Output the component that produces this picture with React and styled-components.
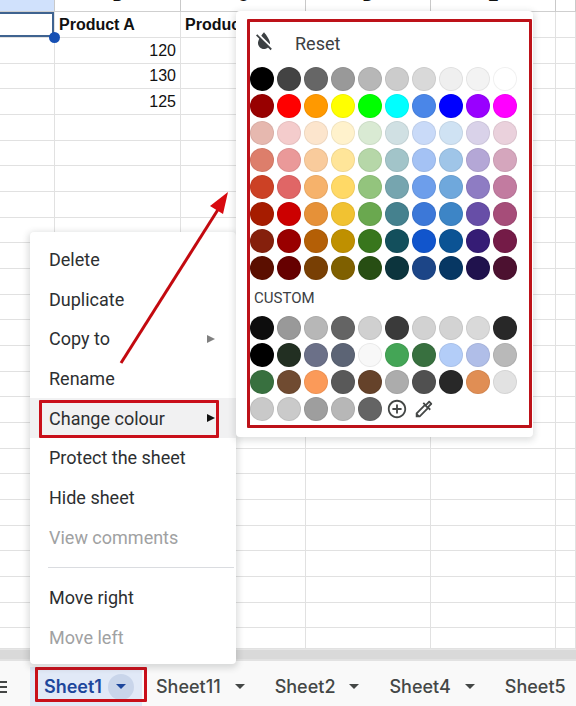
import React from 'react'
import styled, { createGlobalStyle } from 'styled-components'
import { MdFormatColorReset, MdAddCircleOutline, MdOutlineColorize } from 'react-icons/md'

const ROWS = [
    ['', 'Product A', 'Product B', '', '', ''],
    ['', '120', '', '', '', ''],
    ['', '130', '', '', '', ''],
    ['', '125', '', '', '', ''],
    ...Array.from({ length: 21 }, () => ['', '', '', '', '', '']),
]

const MENU = [
    { label: 'Delete' },
    { label: 'Duplicate' },
    { label: 'Copy to', submenu: true },
    { label: 'Rename' },
    { label: 'Change colour', submenu: true, active: true },
    { label: 'Protect the sheet' },
    { label: 'Hide sheet' },
    { label: 'View comments', disabled: true },
]

const COLOURS = [
    '#000000', '#434343', '#666666', '#999999', '#b7b7b7', '#cccccc', '#d9d9d9', '#efefef', '#f3f3f3', '#ffffff',
    '#980000', '#ff0000', '#ff9900', '#ffff00', '#00ff00', '#00ffff', '#4a86e8', '#0000ff', '#9900ff', '#ff00ff',
    '#e6b8af', '#f4cccc', '#fce5cd', '#fff2cc', '#d9ead3', '#d0e0e3', '#c9daf8', '#cfe2f3', '#d9d2e9', '#ead1dc',
    '#dd7e6b', '#ea9999', '#f9cb9c', '#ffe599', '#b6d7a8', '#a2c4c9', '#a4c2f4', '#9fc5e8', '#b4a7d6', '#d5a6bd',
    '#cc4125', '#e06666', '#f6b26b', '#ffd966', '#93c47d', '#76a5af', '#6d9eeb', '#6fa8dc', '#8e7cc3', '#c27ba0',
    '#a61c00', '#cc0000', '#e69138', '#f1c232', '#6aa84f', '#45818e', '#3c78d8', '#3d85c6', '#674ea7', '#a64d79',
    '#85200c', '#990000', '#b45f06', '#bf9000', '#38761d', '#134f5c', '#1155cc', '#0b5394', '#351c75', '#741b47',
    '#5b0f00', '#660000', '#783f04', '#7f6000', '#274e13', '#0c343d', '#1c4587', '#073763', '#20124d', '#4c1130',
]

const CUSTOM = [
    '#0d0d0d', '#999999', '#b7b7b7', '#646464', '#d0d0d0', '#3a3a3a', '#d2d2d2', '#d3d3d3', '#d9d9d9', '#282828',
    '#000000', '#222f22', '#6b7088', '#5c6475', '#f8f8f8', '#44a556', '#38703f', '#b3cdf8', '#b0bee8', '#b9b9b9',
    '#38703f', '#704b31', '#fb9a59', '#595959', '#65422a', '#acacac', '#505050', '#282828', '#e08e54', '#e2e2e2',
    '#c9c9c9', '#cacaca', '#9e9e9e', '#b7b7b7', '#646464',
]

const TABS = ['Sheet1', 'Sheet11', 'Sheet2', 'Sheet4', 'Sheet5']

const Grid = () => (
    <Table>
        <colgroup>
            <Col $w={55} />
            <Col $w={126} />
            <Col $w={125} />
            <Col $w={125} />
            <Col $w={125} />
            <col />
        </colgroup>
        <thead>
            <tr>
                {['', 'B', 'C', 'D', 'E', ''].map((letter, i) => (
                    <HeadCell key={i} $selected={i === 0}>
                        <Letter>{letter}</Letter>
                    </HeadCell>
                ))}
            </tr>
        </thead>
        <tbody>
            {ROWS.map((row, r) => (
                <Row key={r}>
                    {row.map((value, c) => (
                        <Cell key={c} $bold={r === 0} $selected={r === 0 && c === 0}>
                            {value}
                            {r === 0 && c === 0 && <Handle />}
                        </Cell>
                    ))}
                </Row>
            ))}
        </tbody>
    </Table>
)

const Palette = () => (
    <PalettePanel>
        <ResetButton>
            <MdFormatColorReset size={24} />
            Reset
        </ResetButton>
        <Swatches>
            {COLOURS.map((colour) => (
                <Swatch key={colour} $colour={colour} aria-label={colour} />
            ))}
        </Swatches>
        <PaletteTitle>CUSTOM</PaletteTitle>
        <Swatches>
            {CUSTOM.map((colour, i) => (
                <Swatch key={i} $colour={colour} aria-label={colour} />
            ))}
            <ToolButton aria-label="Add custom colour">
                <MdAddCircleOutline size={22} />
            </ToolButton>
            <ToolButton aria-label="Pick a colour">
                <MdOutlineColorize size={22} />
            </ToolButton>
        </Swatches>
        <PaletteMark />
    </PalettePanel>
)

const ContextMenu = () => (
    <Menu>
        {MENU.map(({ label, submenu, active, disabled }) => (
            <MenuItem key={label} $active={active} disabled={disabled}>
                {label}
                {submenu && <SubArrow $active={active} />}
                {active && <ItemMark />}
            </MenuItem>
        ))}
        <Divider />
        <MenuItem>Move right</MenuItem>
        <MenuItem disabled>Move left</MenuItem>
    </Menu>
)

const App = () => (
    <Screen>
        <GlobalStyle />
        <Grid />
        <ScrollStrip />
        <TabBar>
            <AllSheets aria-label="All sheets">
                <svg width="8" height="12" viewBox="0 0 8 12">
                    <path d="M0 1h7M0 6h7M0 11h7" stroke="#444746" strokeWidth="2" />
                </svg>
            </AllSheets>
            {TABS.map((name, i) => (
                <Tab key={name} $active={i === 0}>
                    <TabName $active={i === 0}>{name}</TabName>
                    <TabCaret $active={i === 0} aria-label={`${name} options`}>
                        <Caret />
                    </TabCaret>
                    {i === 0 && <TabMark />}
                </Tab>
            ))}
        </TabBar>
        <ContextMenu />
        <Palette />
        <Arrow width="120" height="180" viewBox="0 0 120 180">
            <path d="M6 173L104 18" stroke="#c3090f" strokeWidth="3" />
            <path d="M113 2L95 16L108 24Z" fill="#d80a10" />
        </Arrow>
    </Screen>
)

const GlobalStyle = createGlobalStyle`
    * {
        box-sizing: border-box;
    }
    body {
        margin: 0;
        background: #fff;
        overflow: hidden;
        font-family: Roboto, sans-serif;
    }
    button {
        border: none;
        padding: 0;
        background: none;
        font: inherit;
        color: inherit;
        cursor: pointer;
    }
`

const Screen = styled.div`
    position: relative;
    display: flex;
    flex-direction: column;
    min-height: 100vh;
    overflow: hidden;
`

const Table = styled.table`
    width: 100%;
    table-layout: fixed;
    border-collapse: separate;
    border-spacing: 0;
    font-family: "Liberation Sans", Arial, sans-serif;
    font-size: 16px;
    color: #111;
`

const Col = styled.col`
    width: ${({ $w }) => $w}px;
`

const HeadCell = styled.th`
    padding: 0;
    background: ${({ $selected }) => ($selected ? '#d0e1fc' : '#fff')};
    border-right: 1px solid #c9c9c9;
    border-bottom: 1px solid #cfcfcf;
`

const Letter = styled.div`
    height: 11px;
    padding-bottom: 7px;
    display: flex;
    align-items: flex-end;
    justify-content: center;
    overflow: hidden;
    line-height: 16px;
    font-weight: 400;
`

const Row = styled.tr`
    height: 26px;
    &:nth-child(3n) {
        height: 25px;
    }
    &:last-child {
        height: 21px;
    }
`

const Cell = styled.td`
    position: relative;
    padding: 0 4px;
    line-height: 24px;
    white-space: nowrap;
    border-right: 1px solid #e1e1e1;
    border-bottom: 1px solid #e1e1e1;
    text-align: ${({ $bold }) => ($bold ? 'left' : 'right')};
    font-weight: ${({ $bold }) => ($bold ? 700 : 400)};
    box-shadow: ${({ $selected }) => ($selected ? 'inset -2px 2px #3f6390, inset 0 -2px #3f6390' : 'none')};
`

const Handle = styled.span`
    position: absolute;
    right: -6px;
    bottom: -6px;
    z-index: 1;
    width: 11px;
    height: 11px;
    border-radius: 50%;
    background: #1650b4;
`

const ScrollStrip = styled.div`
    height: 12px;
    background: #d9d9d9;
    border-top: 1px solid #e6e6e6;
    border-bottom: 2px solid #e2e2e2;
`

const TabBar = styled.nav`
    flex: 1;
    min-height: 45px;
    padding-top: 6px;
    display: flex;
    background: #f9f9f9;
`

const AllSheets = styled.button`
    width: 30px;
    flex: none;
    display: flex;
    align-items: center;
`

const Tab = styled.div`
    position: relative;
    flex: none;
    display: flex;
    align-items: center;
    gap: 6px;
    padding: 0 8px 0 14px;
    background: ${({ $active }) => ($active ? '#e1e9f7' : 'transparent')};
`

const TabName = styled.button`
    font-family: Inter, Roboto, sans-serif;
    font-size: 18px;
    line-height: 24px;
    font-weight: ${({ $active }) => ($active ? 600 : 500)};
    color: ${({ $active }) => ($active ? '#1d469c' : '#444746')};
`

const TabCaret = styled.button`
    width: 26px;
    height: 26px;
    display: flex;
    align-items: center;
    justify-content: center;
    border-radius: 50%;
    color: ${({ $active }) => ($active ? '#1d469c' : '#444746')};
    background: ${({ $active }) => ($active ? '#c9d5ea' : 'transparent')};
`

const Caret = styled.span`
    border: 5px solid transparent;
    border-top-color: currentColor;
    border-bottom: none;
`

const Mark = styled.div`
    position: absolute;
    border: 3px solid #c90f1a;
    border-radius: 1px;
    pointer-events: none;
`

const TabMark = styled(Mark)`
    inset: 0 -5px 4px 5px;
`

const Menu = styled.div`
    position: absolute;
    left: 30px;
    top: 232px;
    width: 206px;
    padding: 7px 0;
    display: flex;
    flex-direction: column;
    background: #fff;
    border-radius: 4px;
    box-shadow: 0 2px 6px 2px rgba(60, 64, 67, .18);
`

const MenuItem = styled.button`
    position: relative;
    height: 40px;
    padding: 0 21px 0 19px;
    display: flex;
    align-items: center;
    justify-content: space-between;
    font-size: 18px;
    color: #2d2f31;
    background: ${({ $active }) => ($active ? '#f1f1f2' : 'transparent')};
    &:nth-child(3n) {
        height: 39px;
    }
    &:disabled {
        color: #a0a1a2;
    }
`

const SubArrow = styled.span`
    border: 4px solid transparent;
    border-left: 8px solid ${({ $active }) => ($active ? '#111' : '#808080')};
    border-right: none;
`

const ItemMark = styled(Mark)`
    inset: 2px 17px 0 9px;
`

const Divider = styled.hr`
    width: 186px;
    height: 1px;
    margin: 10px 0 9px 18px;
    border: none;
    background: #dadce0;
`

const PalettePanel = styled.div`
    position: absolute;
    left: 236px;
    top: 11px;
    width: 297px;
    padding: 16px 14px 16px;
    display: flex;
    flex-direction: column;
    background: #fff;
    border-radius: 4px;
    box-shadow: 0 2px 6px 2px rgba(60, 64, 67, .15);
`

const ResetButton = styled.button`
    height: 32px;
    margin-bottom: 8px;
    padding-left: 2px;
    display: flex;
    align-items: center;
    gap: 19px;
    font-size: 18px;
    color: #3c4043;
    svg {
        margin-bottom: 4px;
    }
`

const Swatches = styled.div`
    display: grid;
    grid-template-columns: repeat(10, 24px);
    gap: 3px;
`

const Swatch = styled.button`
    width: 24px;
    height: 24px;
    border-radius: 50%;
    background: ${({ $colour }) => $colour};
    box-shadow: inset 0 0 0 1px rgba(0, 0, 0, .06);
`

const ToolButton = styled.button`
    width: 24px;
    height: 24px;
    display: flex;
    align-items: center;
    justify-content: center;
    color: #444746;
`

const PaletteTitle = styled.div`
    height: 36px;
    padding: 9px 4px 0;
    font-size: 15px;
    line-height: 18px;
    font-weight: 400;
    color: #3c4043;
`

const PaletteMark = styled(Mark)`
    inset: 8px 1px 9px 11px;
    border-color: #bd1219;
`

const Arrow = styled.svg`
    position: absolute;
    left: 115px;
    top: 190px;
    pointer-events: none;
`

export default App;
